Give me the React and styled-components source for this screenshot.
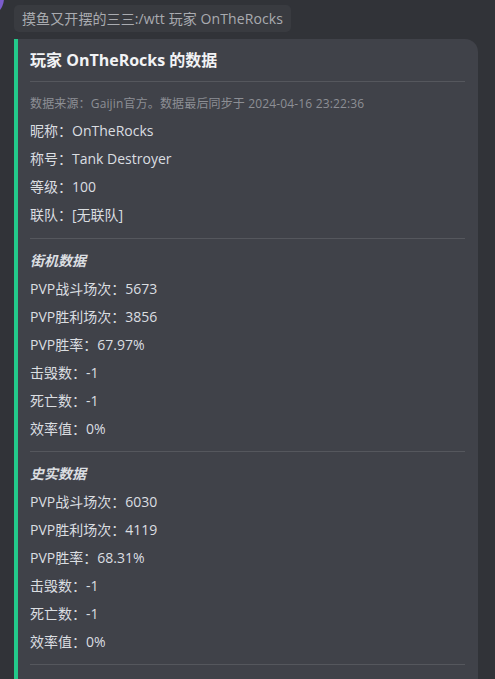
import styled, { createGlobalStyle } from "styled-components";

const GlobalStyle = createGlobalStyle`
    html, body {
        margin: 0;
        padding: 0;
        background: #313338;
        overflow: hidden;
    }
    body {
        font-family: "Open Sans", "Noto Sans CJK SC", sans-serif;
        -webkit-font-smoothing: antialiased;
    }
`;

const SPage = styled.div`
    position: relative;
    width: 495px;
    height: 679px;
    overflow: hidden;
    padding: 5px 0 0 14px;
    box-sizing: border-box;
`;

const SAvatar = styled.div`
    position: absolute;
    left: -36px;
    top: -22px;
    width: 40px;
    height: 40px;
    border-radius: 50%;
    background: #7b5ccc;
`;

const SCommand = styled.div`
    display: inline-block;
    height: 27px;
    line-height: 27px;
    padding: 0 8px;
    border-radius: 5px;
    background: #393b40;
    color: #a9abb0;
    font-size: 14px;
    letter-spacing: 0.1px;
    white-space: nowrap;
`;

const SEmbed = styled.div`
    margin-top: 7px;
    width: 464px;
    height: 700px;
    box-sizing: border-box;
    background: #404249;
    border-left: 4px solid #23c98a;
    border-radius: 0 13px 0 0;
    padding: 10px 13px 0 12px;
`;

const STitle = styled.div`
    color: #f2f3f5;
    font-size: 16px;
    font-weight: 700;
    line-height: 22px;
`;

const SDivider = styled.div`
    height: 1px;
    background: #55575d;
    margin: ${props => props.$top || 8}px 0 ${props => props.$bottom || 8}px;
`;

const SSource = styled.div`
    color: #8d8f95;
    font-size: 12px;
    line-height: 26px;
    letter-spacing: 0.15px;
    white-space: nowrap;
`;

const SRow = styled.div`
    color: #dbdee1;
    font-size: 14px;
    line-height: 28px;
    white-space: nowrap;
`;

const SSection = styled(SRow)`
    font-weight: 700;
    font-style: italic;
`;

const arcade = [
    ["PVP战斗场次", "5673"],
    ["PVP胜利场次", "3856"],
    ["PVP胜率", "67.97%"],
    ["击毁数", "-1"],
    ["死亡数", "-1"],
    ["效率值", "0%"],
];

const realistic = [
    ["PVP战斗场次", "6030"],
    ["PVP胜利场次", "4119"],
    ["PVP胜率", "68.31%"],
    ["击毁数", "-1"],
    ["死亡数", "-1"],
    ["效率值", "0%"],
];

function StatBlock({ title, rows }) {
    return (
        <>
            <SSection>{title}</SSection>
            {rows.map(([k, v]) => (
                <SRow key={k}>{k}：{v}</SRow>
            ))}
        </>
    );
}

export default function App() {
    return (
        <SPage>
            <GlobalStyle />
            <SAvatar />
            <SCommand>摸鱼又开摆的三三:/wtt 玩家 OnTheRocks</SCommand>
            <SEmbed>
                <STitle>玩家 OnTheRocks 的数据</STitle>
                <SDivider $top={10} $bottom={9} />
                <SSource>数据来源：Gaijin官方。数据最后同步于 2024-04-16 23:22:36</SSource>
                <SRow>昵称：OnTheRocks</SRow>
                <SRow>称号：Tank Destroyer</SRow>
                <SRow>等级：100</SRow>
                <SRow>联队：[无联队]</SRow>
                <SDivider $top={9} />
                <StatBlock title="街机数据" rows={arcade} />
                <SDivider />
                <StatBlock title="史实数据" rows={realistic} />
                <SDivider />
            </SEmbed>
        </SPage>
    );
}
